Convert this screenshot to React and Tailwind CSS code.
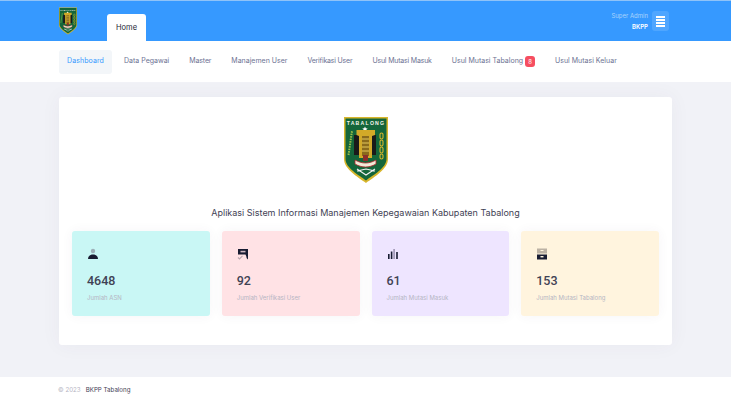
const navItems = [
  { label: "Dashboard", active: true, tracking: "tracking-[0.1px]" },
  { label: "Data Pegawai" },
  { label: "Master", tracking: "tracking-[-0.15px]" },
  { label: "Manajemen User" },
  { label: "Verifikasi User", tracking: "tracking-[-0.2px]" },
  { label: "Usul Mutasi Masuk", tracking: "tracking-[-0.2px]" },
  { label: "Usul Mutasi Tabalong", badge: "8" },
  { label: "Usul Mutasi Keluar" },
];

function Logo({ className }) {
  return (
    <svg viewBox="0 0 44 66" className={className}>
      <path d="M0 0H44V42C44 52 30 60 22 66C14 60 0 52 0 42Z" fill="#d8b62c" />
      <path d="M1.5 1.5H42.5V42C42.5 51 29 58 22 63.5C15 58 1.5 51 1.5 42Z" fill="#14663a" />
      <text x="22" y="7.5" textAnchor="middle" fontSize="5.2" fontWeight="700" letterSpacing="1.2" fill="#f4f4ea" fontFamily="Liberation Sans, sans-serif">
        TABALONG
      </text>
      <path d="M21 9.5l.8 1.8 1.9.2-1.4 1.2.4 1.9-1.7-1-1.7 1 .4-1.9-1.4-1.2 1.9-.2z" fill="#fff" />
      <rect x="10" y="18" width="22" height="20" fill="#1a1a1a" />
      <path d="M12.5 13H31V18L28 19V41H15V19L12.5 18Z" fill="#d2a928" />
      <path d="M18 19H25V39H18Z" fill="#8a6a1c" />
      <path d="M18 22H25M18 26H25M18 30H25M18 34H25" stroke="#e4c95c" strokeWidth="1" />
      <g fill="none" stroke="#d8b62c" strokeWidth="1.1">
        <rect x="36" y="16" width="3" height="6" rx="1.5" />
        <rect x="36" y="23" width="3" height="6" rx="1.5" />
        <rect x="36" y="30" width="3" height="6" rx="1.5" />
        <rect x="36" y="37" width="3" height="5" rx="1.5" />
      </g>
      <path d="M4.5 38L8 14" stroke="#9cc04a" strokeWidth="2" strokeDasharray="1.5 1" />
      <path d="M19 38H24V44H19Z" fill="#8b2f2a" />
      <path d="M11 43C18 47 25 47 32 43V47C25 51 18 51 11 47Z" fill="#f2ecd8" stroke="#b3262c" strokeWidth="0.8" />
      <path d="M13 52L22 58L31 52M31 54L22 52L13 54" stroke="#f2f2f2" strokeWidth="1.1" fill="none" />
    </svg>
  );
}

function StatIcon({ type }) {
  if (type === "user") {
    return (
      <svg viewBox="0 0 12 12" className="w-3 h-3">
        <circle cx="6" cy="3" r="2.2" fill="#9db0b8" />
        <path d="M1 11C1 8 3 6.5 6 6.5S11 8 11 11Z" fill="#181c32" />
      </svg>
    );
  }
  if (type === "check") {
    return (
      <svg viewBox="0 0 12 12" className="w-3 h-3">
        <path d="M1 1H11V11.5L9.5 10V9L8.5 6.5H1Z" fill="#181c32" />
        <rect x="3.5" y="2.8" width="5" height="1.6" fill="#cdb7c0" />
        <path d="M1 9.5L2.5 11L5.5 7.8" stroke="#b9a7ae" strokeWidth="1.1" fill="none" />
      </svg>
    );
  }
  if (type === "chart") {
    return (
      <svg viewBox="0 0 12 12" className="w-3 h-3">
        <rect x="1" y="6" width="1.6" height="5" fill="#181c32" />
        <rect x="3.8" y="3.5" width="1.6" height="7.5" fill="#181c32" />
        <rect x="6.3" y="1" width="1.6" height="10" fill="#9d95b4" />
        <rect x="9.2" y="4" width="1.6" height="7" fill="#181c32" />
      </svg>
    );
  }
  return (
    <svg viewBox="0 0 12 12" className="w-3 h-3">
      <rect x="1" y="0.5" width="10" height="5" fill="#bcb2a4" />
      <rect x="4.5" y="2" width="3" height="1" fill="#fff5df" />
      <rect x="1" y="6.5" width="10" height="5" fill="#181c32" />
      <rect x="4.5" y="8" width="3" height="1.4" fill="#fff5df" />
    </svg>
  );
}

const stats = [
  { icon: "user", value: "4648", label: "Jumlah ASN", bg: "bg-[#c9f7f5]" },
  { icon: "check", value: "92", label: "Jumlah Verifikasi User", bg: "bg-[#ffe2e5]" },
  { icon: "chart", value: "61", label: "Jumlah Mutasi Masuk", bg: "bg-[#eee5ff]" },
  { icon: "box", value: "153", label: "Jumlah Mutasi Tabalong", bg: "bg-[#fff4de]" },
];

export default function App() {
  return (
    <div className="flex h-[401px] w-[731px] flex-col overflow-hidden bg-[#f1f2f7] font-['Inter','Open_Sans',sans-serif]">
      <header className="flex h-[41px] shrink-0 items-stretch border-t border-[#8fc3f8] bg-[#3699ff] pl-[59px] pr-[62px]">
        <Logo className="mt-[6px] h-[28px] w-[18px]" />
        <div className="ml-[30px] mt-[13px] flex w-[39px] items-center justify-center rounded-t-[3px] bg-white text-[7.5px] text-[#181c32]">
          Home
        </div>
        <div className="ml-auto flex items-center gap-1">
          <div className="text-right text-[6px] leading-[11px]">
            <div className="text-[#a9d3fd]">Super Admin</div>
            <div className="font-semibold text-white">BKPP</div>
          </div>
          <div className="flex h-5 w-[17px] flex-col items-center justify-center gap-[1px] rounded-[3px] bg-[#4fa6ff]">
            <span className="h-[2px] w-[9px] bg-white" />
            <span className="h-[2px] w-[9px] bg-white" />
            <span className="h-[2px] w-[9px] bg-white" />
            <span className="h-[2px] w-[9px] bg-white" />
          </div>
        </div>
      </header>

      <nav className="flex h-[41px] shrink-0 items-center bg-white pl-[59px] text-[7px] text-[#6c7293]">
        {navItems.map((item) => (
          <div
            key={item.label}
            className={`mr-1 flex h-6 items-center gap-[2px] rounded-[3px] px-2 ${item.active ? "bg-[#f3f6f9] text-[#3699ff]" : ""} ${item.tracking || ""}`}
          >
            {item.label}
            {item.badge && (
              <span className="flex h-[11px] w-[10px] items-center justify-center rounded-[3px] bg-[#f64e60] text-[6px] text-white">
                {item.badge}
              </span>
            )}
          </div>
        ))}
      </nav>

      <main className="flex flex-1 items-start px-[59px] pt-[15px]">
        <section className="flex h-[248px] w-[613px] flex-col items-center rounded-[3px] bg-white px-[13px] pt-[20px] shadow-[0_0_20px_rgba(82,63,105,0.05)]">
          <Logo className="h-[66px] w-[44px]" />
          <h1 className="mt-[23px] text-[9px] text-[#3f4254]">
            Aplikasi Sistem Informasi Manajemen Kepegawaian Kabupaten Tabalong
          </h1>
          <div className="mt-[11px] grid w-full grid-cols-4 gap-3">
            {stats.map((s) => (
              <div
                key={s.label}
                className={`h-[85px] rounded-[3px] px-[15px] pt-[17px] shadow-[0_0_12px_rgba(82,63,105,0.05)] ${s.bg}`}
              >
                <StatIcon type={s.icon} />
                <div className="mt-[13px] font-['Roboto',sans-serif] text-[12.5px] font-medium leading-[16px] text-[#3f4254]">
                  {s.value}
                </div>
                <div className="mt-[4px] text-[6px] leading-[9px] text-[#b5b5c3]">{s.label}</div>
              </div>
            ))}
          </div>
        </section>
      </main>

      <footer className="flex h-6 shrink-0 items-center gap-[5px] bg-white pl-[58px] pt-[2px] text-[6.2px]">
        <span className="text-[#b5b5c3]">© 2023</span>
        <span className="text-[#3f4254]">BKPP Tabalong</span>
      </footer>
    </div>
  );
}
